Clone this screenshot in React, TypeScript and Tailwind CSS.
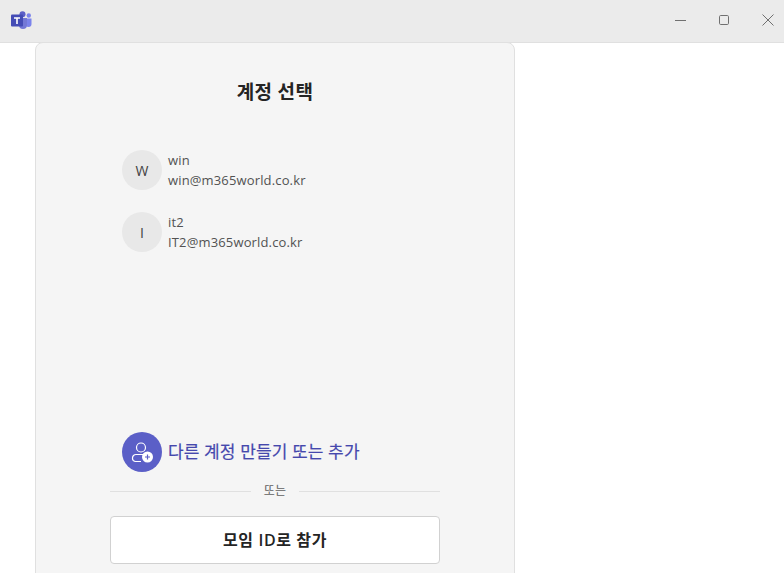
export default function App() {
  return (
    <div className="w-[784px] h-[573px] overflow-hidden bg-white flex flex-col font-['Open_Sans','Noto_Sans_CJK_KR',sans-serif] text-[#242424]">
      <div className="h-[43px] shrink-0 bg-[#ebebeb] border-b border-[#e0e0e0] flex items-center justify-between">
        <svg className="ml-[11px] mb-[3px]" width="21" height="18" viewBox="0 0 21 18">
          <circle cx="17.800" cy="4.500" r="2.200" fill="#7b83eb" />
          <path d="M14 7.500h6.500v5.500a3 3 0 0 1-6 0z" fill="#7b83eb" />
          <circle cx="11.500" cy="3.200" r="3" fill="#5b5fc7" />
          <path d="M7 7h9v7a4 4 0 0 1-8 0z" fill="#7378d6" />
          <rect x="0" y="3.500" width="12" height="12" rx="1" fill="#444cb5" />
          <path d="M3 6.300h6v1.400H6.800v5.200H5.200V7.700H3z" fill="#fff" />
        </svg>
        <div className="flex items-center mr-[9px] mb-[3px]">
          <svg className="mr-[27px]" width="14" height="14" viewBox="0 0 14 14"><path d="M1 7.500h11" stroke="#707070" fill="none" /></svg>
          <svg className="mr-[28px]" width="18" height="14" viewBox="0 0 18 14"><rect x="4.500" y="2.500" width="9" height="9" rx="1.200" stroke="#707070" fill="none" /></svg>
          <svg width="14" height="14" viewBox="0 0 14 14"><path d="M1.500 1.500l11 11M12.500 1.500l-11 11" stroke="#707070" fill="none" /></svg>
        </div>
      </div>
      <div className="ml-[35px] w-[480px] h-[560px] shrink-0 bg-[#f5f5f5] border border-[#e0e0e0] rounded-t-[8px] -mt-px flex flex-col">
        <h1 className="mt-[35px] text-center text-[19px] leading-[28px] font-semibold tracking-[0.3px] text-[#242424]">계정 선택</h1>
        <div className="mt-[44px] ml-[86px] flex flex-col gap-[22px]">
          {[
            ["W", "win", "win@m365world.co.kr"],
            ["I", "it2", "IT2@m365world.co.kr"],
          ].map(([initial, name, mail]) => (
            <div key={name} className="flex items-center h-[40px] gap-[6px]">
              <div className="w-[40px] h-[40px] rounded-full bg-[#e8e8e8] flex items-center justify-center text-[14px] font-medium text-[#424242]">{initial}</div>
              <div className="text-[13px] leading-[20px] text-[#525252] tracking-[0.15px]">
                <div>{name}</div>
                <div>{mail}</div>
              </div>
            </div>
          ))}
        </div>
        <div className="mt-[180px] ml-[86px] flex items-center gap-[6px]">
          <div className="w-[40px] h-[40px] rounded-full bg-[#5b5fc7] flex items-center justify-center">
            <svg width="22" height="22" viewBox="0 0 22 22" fill="none">
              <circle cx="10" cy="6.500" r="4.500" stroke="#fff" strokeWidth="1.200" />
              <path d="M10 20.500H4.500A3 3 0 0 1 1.500 17.500v-.5a3.500 3.500 0 0 1 3.500-3.500h7" stroke="#fff" strokeWidth="1.200" />
              <circle cx="16.500" cy="16" r="5.500" fill="#fff" />
              <path d="M16.500 13.500v5M14 16h5" stroke="#5b5fc7" strokeWidth="1.200" />
            </svg>
          </div>
          <span className="text-[17px] font-normal text-[#4548ad] tracking-[0.13px] [-webkit-text-stroke:0.2px_#4548ad]">다른 계정 만들기 또는 추가</span>
        </div>
        <div className="mt-[7px] mx-[74px] flex items-center gap-[13px]">
          <div className="h-px flex-1 bg-[#e0e0e0]" />
          <span className="text-[12px] leading-[24px] text-[#616161] tracking-[0.2px]">또는</span>
          <div className="h-px flex-1 bg-[#e0e0e0]" />
        </div>
        <button className="mt-[13px] mx-[74px] h-[48px] bg-white border border-[#d1d1d1] rounded-[4px] text-[16px] font-semibold tracking-[0.6px] text-[#242424]">모임 ID로 참가</button>
      </div>
    </div>
  );
}
